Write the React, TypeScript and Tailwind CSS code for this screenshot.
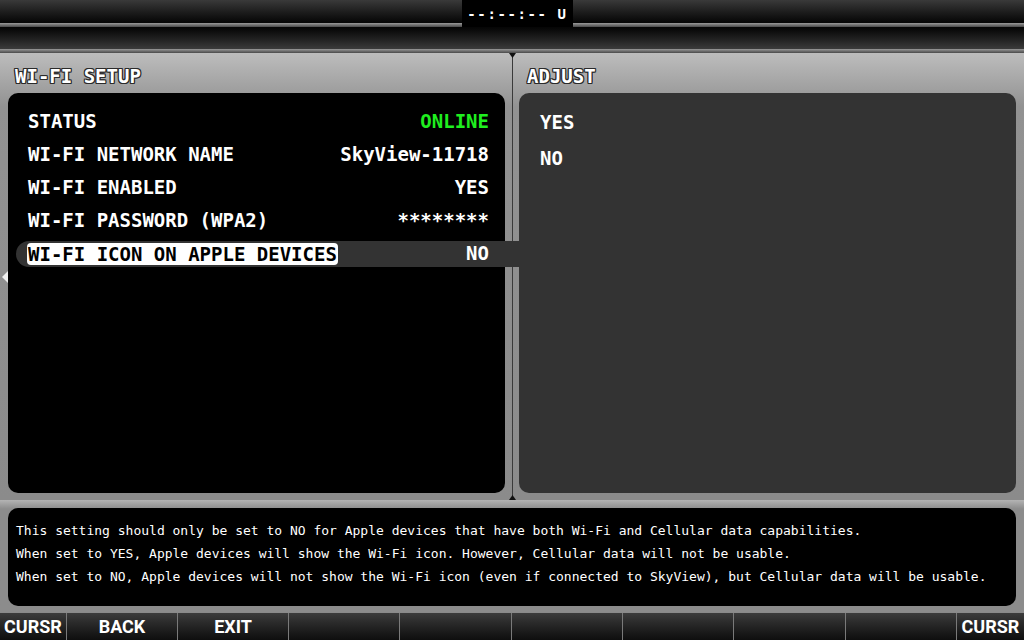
import React from "react";

const mono = "font-['DejaVu_Sans_Mono',monospace]";
const outline = "[text-shadow:-1px_0_#2a2a2a,1px_0_#2a2a2a,0_1px_#2a2a2a,0_-1px_#2a2a2a,1px_1px_#2a2a2a,-1px_-1px_#2a2a2a,1px_-1px_#2a2a2a,-1px_1px_#2a2a2a]";

const rows = [
  { label: "STATUS", value: "ONLINE", green: true },
  { label: "WI-FI NETWORK NAME", value: "SkyView-11718" },
  { label: "WI-FI ENABLED", value: "YES" },
  { label: "WI-FI PASSWORD (WPA2)", value: "********" },
];

const softkeys = [
  { label: "CURSR", w: "w-[67px]" },
  { label: "BACK", w: "w-[111px]" },
  { label: "EXIT", w: "w-[111px]" },
  { label: "", w: "w-[111px]" },
  { label: "", w: "w-[112px]" },
  { label: "", w: "w-[111px]" },
  { label: "", w: "w-[111px]" },
  { label: "", w: "w-[112px]" },
  { label: "", w: "w-[111px]" },
  { label: "CURSR", w: "flex-1" },
];

function TopBar({ flip }: { flip?: boolean }) {
  return (
    <div className="flex h-full flex-col">
      <div
        className={
          "flex-1 bg-linear-to-b " +
          (flip ? "from-[#050505] to-[#3c3c3c]" : "from-[#3a3a3a] to-[#060606]")
        }
      />
      <div className="h-[4px] bg-linear-to-b from-[#9a9a9a] to-[#4a4a4a]" />
    </div>
  );
}

export default function App() {
  return (
    <div className={"relative flex h-[640px] w-[1024px] flex-col overflow-hidden bg-black " + mono}>
      {/* TOP BAR 1 with clock */}
      <div className="flex h-[27px]">
        <div className="w-[462px]">
          <TopBar />
        </div>
        <div className="flex w-[111px] items-center justify-center bg-black pt-[2px] text-[14px] font-bold tracking-[1.6px] text-white">
          --:--:-- U
        </div>
        <div className="flex-1">
          <TopBar />
        </div>
      </div>

      {/* TOP BAR 2 */}
      <div className="h-[26px]">
        <TopBar flip />
      </div>

      {/* MAIN PANELS */}
      <div className="relative flex h-[447px] bg-linear-to-b from-[#bdbdbd] via-[#929292] via-[12%] to-[#8b8b8b]">
        {/* LEFT: WI-FI SETUP */}
        <div className="flex w-[512px] flex-col">
          <div className={"flex h-[40px] items-center pl-[15px] pt-[6px] text-[19px] font-bold text-white " + outline}>
            WI-FI SETUP
          </div>
          <div className="mb-[7px] ml-[8px] mr-[7px] flex-1 rounded-[10px] bg-black pt-[12px]">
            {rows.map((r) => (
              <div
                key={r.label}
                className="flex h-[33px] items-center justify-between pl-[20px] pr-[16px] text-[19px] font-bold text-white"
              >
                <span>{r.label}</span>
                <span className={r.green ? "text-[#1fee1f]" : ""}>{r.value}</span>
              </div>
            ))}
            {/* SELECTED ROW */}
            <div className="flex h-[33px] items-center pl-[8px]">
              <div className="relative flex h-[26px] flex-1 items-center justify-between rounded-l-[13px] bg-[#333333] pl-[11px] pr-[16px] text-[19px] font-bold">
                <span className="rounded-[4px] bg-white px-[1px] leading-[22px] text-black">
                  WI-FI ICON ON APPLE DEVICES
                </span>
                <span className="text-white">NO</span>
                <div className="absolute right-[-15px] top-0 h-[26px] w-[15px] bg-[#333333]" />
              </div>
            </div>
          </div>
        </div>

        {/* DIVIDER */}
        <div className="w-[1px] bg-[#3a3a3a]" />

        {/* RIGHT: ADJUST */}
        <div className="flex flex-1 flex-col">
          <div className={"flex h-[40px] items-center pl-[14px] pt-[6px] text-[19px] font-bold text-white " + outline}>
            ADJUST
          </div>
          <div className="mb-[7px] ml-[6px] mr-[8px] flex-1 rounded-[10px] bg-[#333333] pt-[11px]">
            {["YES", "NO"].map((v) => (
              <div key={v} className="flex h-[36px] items-center pl-[21px] text-[19px] font-bold text-white">
                {v}
              </div>
            ))}
          </div>
        </div>

        {/* markers */}
        <svg className="absolute left-[509px] top-0" width="7" height="5" viewBox="0 0 7 5">
          <path d="M0 0 L7 0 L3.5 5 Z" fill="#111" />
        </svg>
        <svg className="absolute bottom-0 left-[509px]" width="7" height="5" viewBox="0 0 7 5">
          <path d="M0 5 L7 5 L3.5 0 Z" fill="#111" />
        </svg>
        <svg className="absolute left-[2px] top-[218px]" width="6" height="12" viewBox="0 0 6 12">
          <path d="M6 0 L0 6 L6 12 Z" fill="#f0f0f0" />
        </svg>
      </div>

      {/* HELP TEXT */}
      <div className="flex h-[112px] flex-col bg-linear-to-b from-[#b4b4b4] via-[#8c8c8c] via-[8%] to-[#8c8c8c] px-[8px] pb-[6px] pt-[8px]">
        <div className="flex-1 rounded-[10px] bg-black pl-[8px] pt-[11px] text-[13px] leading-[23px] text-white">
          <div>This setting should only be set to NO for Apple devices that have both Wi-Fi and Cellular data capabilities.</div>
          <div>When set to YES, Apple devices will show the Wi-Fi icon. However, Cellular data will not be usable.</div>
          <div>When set to NO, Apple devices will not show the Wi-Fi icon (even if connected to SkyView), but Cellular data will be usable.</div>
        </div>
      </div>

      {/* SOFTKEYS */}
      <div className="flex h-[28px] border-t border-[#8a8a8a] bg-linear-to-b from-[#3c3c3c] to-[#0e0e0e]">
        {softkeys.map((k, i) => (
          <div
            key={i}
            className={
              k.w +
              " flex items-center justify-center font-['Roboto',sans-serif] text-[18px] font-bold text-white " +
              (i < softkeys.length - 1 ? "border-r border-[#7a7a7a]" : "")
            }
          >
            {k.label}
          </div>
        ))}
      </div>
    </div>
  );
}
